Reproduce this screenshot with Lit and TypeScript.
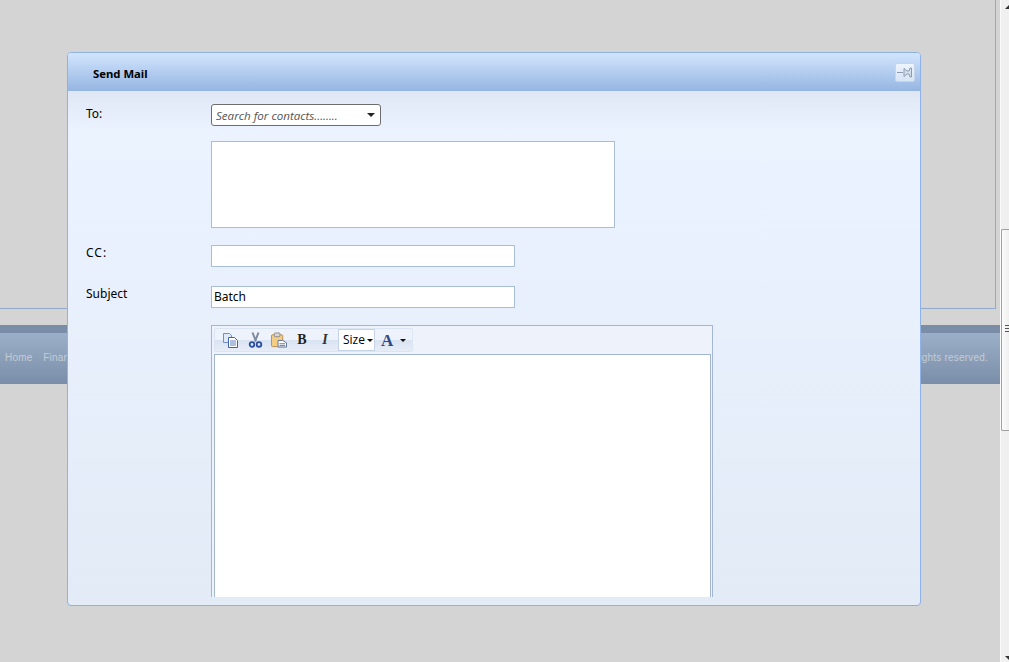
import { LitElement, html, css } from "lit";
import { customElement } from "lit/decorators.js";

@customElement("app-root")
export class AppRoot extends LitElement {
  static styles = css`
    :host { display: block; width: 1009px; height: 662px; position: relative; overflow: hidden; background: #d4d4d4; font-family: "Open Sans", "Noto Sans", sans-serif; }
    .page { width: 1000px; display: flex; flex-direction: column; }
    .frame { height: 309px; width: 996px; box-sizing: border-box; border-right: 1px solid #92aaca; border-bottom: 1px solid #92aaca; }
    .footer { margin-top: 16px; width: 1000px; height: 59px; border-top: 8px solid #7a8da6; box-sizing: border-box; background: linear-gradient(#9cafc8, #7a8ea9); display: flex; justify-content: space-between; align-items: center; padding: 0 12px 2px 5px; color: #c4ccd6; font: 10px/1 "Liberation Sans", sans-serif; letter-spacing: .2px; }
    .footer .sep { color: #8d9fb7; margin: 0 4px; }
    .scrollbar { position: absolute; left: 1000px; top: 0; bottom: 0; width: 9px; overflow: hidden; background: #f0f0f0; border-left: 1px solid #fbfbfb; box-sizing: border-box; }
    .thumb { position: absolute; left: 0; right: -4px; top: 229px; height: 202px; background: linear-gradient(90deg, #fbfbfb, #e8e8e8); border: 1px solid #a0a0a0; border-right: none; border-radius: 2px 0 0 2px; box-sizing: border-box; }
    .grip { position: absolute; left: 3px; top: 95px; width: 8px; height: 8px; background: repeating-linear-gradient(#555 0 1px, transparent 1px 3px); }
    .arrow { position: absolute; left: 4px; width: 0; height: 0; border-left: 4px solid transparent; border-right: 4px solid transparent; }
    .arrow.up { top: 5px; border-bottom: 4px solid #333; }
    .arrow.down { bottom: 2px; border-top: 4px solid #333; }

    .dialog { position: absolute; left: 67px; top: 52px; width: 854px; height: 554px; box-sizing: border-box; border: 1px solid #8db2e3; border-radius: 4px; overflow: hidden; display: flex; flex-direction: column; background: #e3ebf7; }
    .title { flex: none; height: 38px; box-sizing: border-box; background: linear-gradient(#d2e5fe, #95b5e1); display: flex; align-items: center; justify-content: space-between; padding: 4px 5px 0 25px; font: bold 11.300px/1 "Noto Sans", "Open Sans", sans-serif; color: #000; }
    .pin { width: 20px; height: 19px; box-sizing: border-box; border: 1px solid #c6d5ea; border-radius: 2px; background: linear-gradient(#eef4fc, #d7e4f5); display: flex; align-items: center; justify-content: center; margin-top: -4px; }
    .content { flex: none; height: 506px; overflow: hidden; padding: 13px 0 0 18px; box-sizing: border-box; display: grid; grid-template-columns: 125px 1fr; font: 12px/16px "Noto Sans", "Open Sans", sans-serif; color: #000; align-content: start; background: linear-gradient(#dfe7f4 0, #eaf3ff 40px, #e3ebf7 100%); }
    .label { padding-top: 2px; }
    .select { width: 170px; height: 22px; box-sizing: border-box; border: 1px solid #6d6d6d; border-radius: 3px; background: #fff; display: flex; align-items: center; justify-content: space-between; padding: 2px 5px 0 4px; font: italic 11.600px/1 "Open Sans", sans-serif; color: #555; }
    .caret { width: 0; height: 0; border-left: 4px solid transparent; border-right: 4px solid transparent; border-top: 4px solid #222; margin-top: -2px; }
    .box { background: #fff; border: 1px solid #a9bdd6; box-sizing: border-box; }
    .textarea { width: 404px; height: 87px; margin-top: 15px; }
    .input { height: 22px; width: 304px; padding-left: 2px; line-height: 19px; }
    .cc { margin-top: 17px; }
    .subject { margin-top: 19px; }
    .offset-cc { margin-top: 17px; padding-top: 0; letter-spacing: 1px; }
    .offset-subj { margin-top: 19px; padding-top: 0; }
    .editor { grid-column: 2; margin-top: 17px; width: 502px; height: 400px; border: 1px solid #a4b7d0; box-sizing: border-box; padding: 2px 1px 0 2px; background: #eef3fb; }
    .toolbar { width: 199px; height: 24px; box-sizing: border-box; border: 1px solid #dbe5f3; border-radius: 2px; background: linear-gradient(#eef3fb 0 50%, #d9e3f1 50%, #e6edf7); display: flex; align-items: center; padding-left: 8px; }
    .tool { width: 16px; height: 16px; display: flex; align-items: center; justify-content: center; margin-right: 8px; flex: none; }
    .tool.narrow { margin-right: 7px; }
    .b { font: bold 14px/1 "Liberation Serif", serif; color: #222; }
    .i { font: italic bold 14px/1 "Liberation Serif", serif; color: #333; margin-right: 5px; }
    .size { width: 37px; height: 22px; box-sizing: border-box; background: #fff; border: 1px solid #c5d3e6; display: flex; align-items: center; gap: 2px; padding-left: 4px; font: 12px/1 "Open Sans", sans-serif; margin-right: 6px; flex: none; }
    .tiny { width: 0; height: 0; border-left: 3px solid transparent; border-right: 3px solid transparent; border-top: 3px solid #111; }
    .fa { font: bold 17px/1 "Liberation Serif", serif; color: #2f4a85; margin-right: 7px; }
    .area { height: 380px; margin-top: 2px; width: 497px; border: 1px solid #a4b7d0; background: #fff; box-sizing: border-box; }
  `;

  render() {
    return html`
      <div class="page">
        <div class="frame"></div>
        <div class="footer">
          <span>Home<span class="sep">|</span>Finance</span>
          <span>All rights reserved.</span>
        </div>
      </div>
      <div class="scrollbar">
        <div class="arrow up"></div>
        <div class="thumb"><div class="grip"></div></div>
        <div class="arrow down"></div>
      </div>
      <div class="dialog">
        <div class="title">
          <span>Send Mail</span>
          <div class="pin">
            <svg width="16" height="11" viewBox="0 0 16 11"><path d="M0 5.500h6" stroke="#8b9bb0"/><path d="M7 1.500l3 2.500h2l1-3h1.500v9H13l-1-3h-2l-3 2.500z" fill="#d4deea" stroke="#8b9bb0"/></svg>
          </div>
        </div>
        <div class="content">
          <div class="label">To:</div>
          <div class="select"><span>Search for contacts........</span><span class="caret"></span></div>
          <div></div>
          <div class="box textarea"></div>
          <div class="label offset-cc">CC:</div>
          <div class="box input cc"></div>
          <div class="label offset-subj">Subject</div>
          <div class="box input subject">Batch</div>
          <div class="editor">
            <div class="toolbar">
              <span class="tool">
                <svg width="16" height="15" viewBox="0 0 16 15"><path d="M.5 .5h6l2 2v7h-8z" fill="#dfe9f8" stroke="#6f8fc6"/><path d="M5.500 4.500h6l3 3v7h-9z" fill="#fff" stroke="#3f62a8"/><path d="M7 8h6M7 10h6M7 12h6" stroke="#5f7fbe"/></svg>
              </span>
              <span class="tool">
                <svg width="15" height="16" viewBox="0 0 15 16"><path d="M4.500 .5l3.500 9M10.500 .5L7 9.500" stroke="#7d8a9c" stroke-width="2" fill="none"/><circle cx="4" cy="12.500" r="2.300" fill="none" stroke="#2a4ea0" stroke-width="1.800"/><circle cx="11" cy="12.500" r="2.300" fill="none" stroke="#2a4ea0" stroke-width="1.800"/></svg>
              </span>
              <span class="tool narrow">
                <svg width="17" height="16" viewBox="0 0 17 16"><rect x=".5" y="2.500" width="12" height="12.500" rx="1" fill="#f3cd85" stroke="#b98f4a"/><rect x="3.500" y=".5" width="6" height="4" rx="1" fill="#d8d8d8" stroke="#8a8a8a"/><path d="M7.500 8.500h5l4 2.500v4.500h-9z" fill="#fff" stroke="#5a6f96"/><path d="M9 12h6M9 14h6" stroke="#5a6f96"/></svg>
              </span>
              <span class="tool b narrow">B</span>
              <span class="tool i">I</span>
              <span class="size">Size<span class="tiny"></span></span>
              <span class="fa">A</span>
              <span class="tiny"></span>
            </div>
            <div class="area"></div>
          </div>
        </div>
      </div>
    `;
  }
}
